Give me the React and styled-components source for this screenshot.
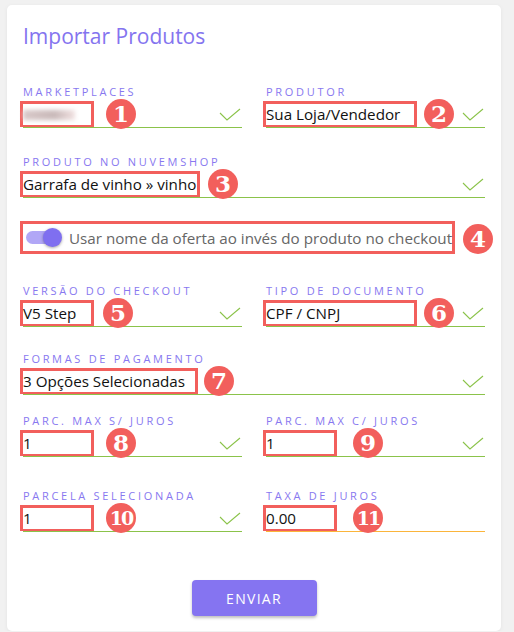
import React from "react";
import styled, { createGlobalStyle } from "styled-components";

const Global = createGlobalStyle`
  html, body { margin: 0; padding: 0; background: #f1f1f1; }
  body { font-family: "Open Sans", "Liberation Sans", sans-serif; }
`;

const Page = styled.div`
  padding: 5px 13px 0 7px;
`;

const Card = styled.div`
  background: #fff;
  border-radius: 5px;
  box-shadow: 0 1px 4px rgba(0,0,0,0.06);
  padding: 18px 16px 15px 16px;
`;

const Title = styled.h1`
  margin: 0 0 36px 0;
  font-size: 21px;
  line-height: 26px;
  font-weight: 400;
  color: #8474ef;
`;

const Row = styled.div`
  display: grid;
  grid-template-columns: 1fr 1fr;
  column-gap: 24px;
  margin-top: ${(p) => p.$mt || 0}px;
`;

const Field = styled.div`
  display: flex;
  flex-direction: column;
  grid-column: ${(p) => (p.$full ? "1 / span 2" : "auto")};
`;

const Label = styled.div`
  font-size: 11px;
  line-height: 14px;
  letter-spacing: 2.7px;
  color: #8878f0;
  text-transform: uppercase;
`;

const InputRow = styled.div`
  display: flex;
  align-items: flex-end;
  height: 28px;
  border-bottom: 1.5px solid ${(p) => (p.$warn ? "#fbb53b" : "#8bc34a")};
`;

const Value = styled.div`
  box-sizing: border-box;
  width: ${(p) => p.$w}px;
  height: 26px;
  margin-left: -3px;
  border: 3px solid #f25f5c;
  border-bottom-width: 2px;
  font-size: 15.2px;
  line-height: 20px;
  color: #111;
  white-space: nowrap;
`;

const Blur = styled.span`
  display: inline-block;
  width: 52px;
  height: 10px;
  margin-top: 5px;
  background: linear-gradient(90deg, #d9c9c9, #c9b9b9 60%, #f1e1e1);
  filter: blur(2px);
`;

const Badge = styled.div`
  flex: none;
  width: 30px;
  height: 30px;
  margin-left: ${(p) => p.$ml}px;
  margin-bottom: -2px;
  border-radius: 50%;
  background: #f25f5c;
  color: #fff;
  font-family: "DejaVu Serif", "Liberation Serif", serif;
  font-weight: 700;
  font-size: ${(p) => (p.$small ? 19 : 23)}px;
  letter-spacing: ${(p) => (p.$small ? -2 : 0)}px;
  line-height: 30px;
  text-align: center;
  position: relative;
  z-index: 1;
`;

const Check = styled.svg`
  margin-left: auto;
  margin-right: 1px;
  margin-bottom: 6px;
  flex: none;
`;

const ToggleBox = styled.div`
  display: flex;
  align-items: center;
  margin-top: 23px;
`;

const ToggleFrame = styled.div`
  box-sizing: border-box;
  width: 443px;
  height: 33px;
  margin-left: -3px;
  border: 3px solid #f25f5c;
  display: flex;
  align-items: center;
  padding-left: 2px;
  gap: 8px;
`;

const Track = styled.div`
  position: relative;
  width: 32px;
  height: 13px;
  border-radius: 7px;
  background: #b1a7f6;
  margin-left: 1px;
`;

const Knob = styled.div`
  position: absolute;
  right: -4px;
  top: -3px;
  width: 19px;
  height: 19px;
  border-radius: 50%;
  background: #7f6ff0;
  box-shadow: 0 1px 3px rgba(0,0,0,0.35);
`;

const ToggleText = styled.span`
  font-size: 15.2px;
  color: #666;
  white-space: nowrap;
  margin-left: 3px;
`;

const Footer = styled.div`
  display: flex;
  justify-content: center;
  margin-top: 48px;
`;

const Button = styled.button`
  width: 125px;
  height: 36px;
  border: none;
  border-radius: 4px;
  background: #8574f1;
  color: #fff;
  font-family: "Open Sans", "Liberation Sans", sans-serif;
  font-size: 14px;
  letter-spacing: 1.3px;
  box-shadow: 0 2px 3px rgba(0,0,0,0.25);
  cursor: pointer;
`;

const CheckIcon = () => (
  <Check width="22" height="13" viewBox="0 0 22 13">
    <polyline points="1,5 8,12 21,1" fill="none" stroke="#8bc34a" strokeWidth="1.1" />
  </Check>
);

const F = ({ label, value, w, n, ml, full, warn, noCheck }) => (
  <Field $full={full}>
    <Label>{label}</Label>
    <InputRow $warn={warn}>
      <Value $w={w}>{value}</Value>
      <Badge $ml={ml} $small={n >= 10}>{n}</Badge>
      {!noCheck && <CheckIcon />}
    </InputRow>
  </Field>
);

export default function App() {
  return (
    <>
      <Global />
      <Page>
        <Card>
          <Title>Importar Produtos</Title>
          <Row>
            <F label="Marketplaces" value={<Blur />} w={74} n={1} ml={12} />
            <F label="Produtor" value="Sua Loja/Vendedor" w={154} n={2} ml={7} />
          </Row>
          <Row $mt={27}>
            <F full label="Produto no Nuvemshop" value="Garrafa de vinho » vinho" w={180} n={3} ml={8} />
          </Row>
          <ToggleBox>
            <ToggleFrame>
              <Track><Knob /></Track>
              <ToggleText>Usar nome da oferta ao invés do produto no checkout</ToggleText>
            </ToggleFrame>
            <Badge $ml={8}>4</Badge>
          </ToggleBox>
          <Row $mt={30}>
            <F label="Versão do Checkout" value="V5 Step" w={74} n={5} ml={9} />
            <F label="Tipo de Documento" value="CPF / CNPJ" w={154} n={6} ml={7} />
          </Row>
          <Row $mt={25}>
            <F full label="Formas de Pagamento" value="3 Opções Selecionadas" w={178} n={7} ml={6} />
          </Row>
          <Row $mt={19}>
            <F label="Parc. Max S/ Juros" value="1" w={74} n={8} ml={12} />
            <F label="Parc. Max C/ Juros" value="1" w={74} n={9} ml={16} />
          </Row>
          <Row $mt={32}>
            <F label="Parcela Selecionada" value="1" w={74} n={10} ml={12} />
            <F label="Taxa de Juros" value="0.00" w={74} n={11} ml={16} warn noCheck />
          </Row>
          <Footer>
            <Button>ENVIAR</Button>
          </Footer>
        </Card>
      </Page>
    </>
  );
}
